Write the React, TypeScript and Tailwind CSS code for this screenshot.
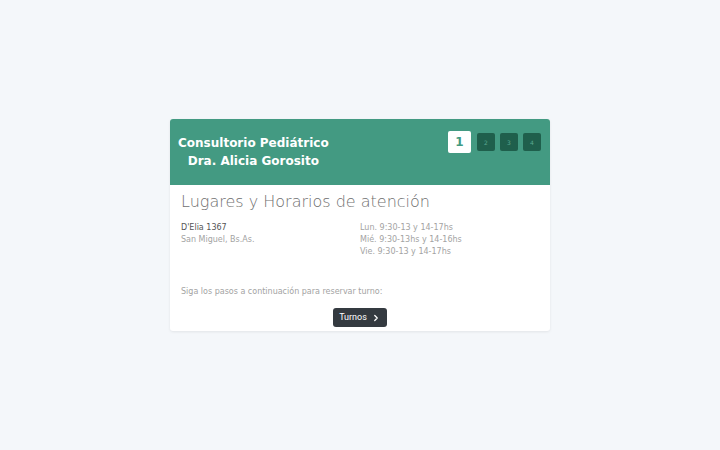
import React from 'react';
import { ChevronRight } from 'lucide-react';

const horarios = ['Lun. 9:30-13 y 14-17hs', 'Mié. 9:30-13hs y 14-16hs', 'Vie. 9:30-13 y 14-17hs'];

const Steps: React.FC = () => (
  <div className="flex items-center gap-[5px]">
    <div className="w-[23px] h-[22px] mr-[1px] bg-white rounded-[2px] flex items-center justify-center text-[12px] font-bold text-[#439a82]">1</div>
    {[2, 3, 4].map((n) => (
      <div key={n} className="w-[18px] h-[18px] bg-[#1f5f4c] rounded-[2px] flex items-center justify-center text-[6px] text-[#5aa68f]">
        {n}
      </div>
    ))}
  </div>
);

export default function App() {
  return (
    <div className="w-full h-[450px] bg-[#f4f7fa] flex justify-center pt-[119px] font-['DejaVu_Sans',sans-serif]">
      <div className="w-[380px] h-[212px] bg-white rounded-[3px] shadow-[0_1px_3px_rgba(0,0,0,0.08)] overflow-hidden flex flex-col">
        <header className="h-[66px] bg-[#439a82] flex items-start justify-between pl-[8px] pr-[9px]">
          <h1 className="mt-[15px] text-white font-bold text-[12px] leading-[18px] text-center">
            Consultorio Pediátrico<br />Dra. Alicia Gorosito
          </h1>
          <div className="mt-[12px]">
            <Steps />
          </div>
        </header>
        <div className="flex flex-col px-[11px] pt-[6px]">
          <h2 className="text-[16px] font-extralight leading-[22px] text-[#6f6f6f]">Lugares y Horarios de atención</h2>
          <div className="grid grid-cols-2 mt-[9px] text-[8px] leading-[12px]">
            <div>
              <div className="text-[#555]">D'Elia 1367</div>
              <div className="text-[#a3a3a3]">San Miguel, Bs.As.</div>
            </div>
            <div className="text-[#a3a3a3]">
              {horarios.map((h) => (
                <div key={h}>{h}</div>
              ))}
            </div>
          </div>
          <p className="mt-[28px] text-[8px] leading-[12px] text-[#a3a3a3]">Siga los pasos a continuación para reservar turno:</p>
          <div className="flex justify-center mt-[10px]">
            <button className="h-[19px] px-[6px] bg-[#343a40] rounded-[3px] text-white text-[9px] font-['Roboto',sans-serif] flex items-center gap-[4px]">
              Turnos
              <ChevronRight className="w-[10px] h-[10px]" strokeWidth={3} />
            </button>
          </div>
        </div>
      </div>
    </div>
  );
}
